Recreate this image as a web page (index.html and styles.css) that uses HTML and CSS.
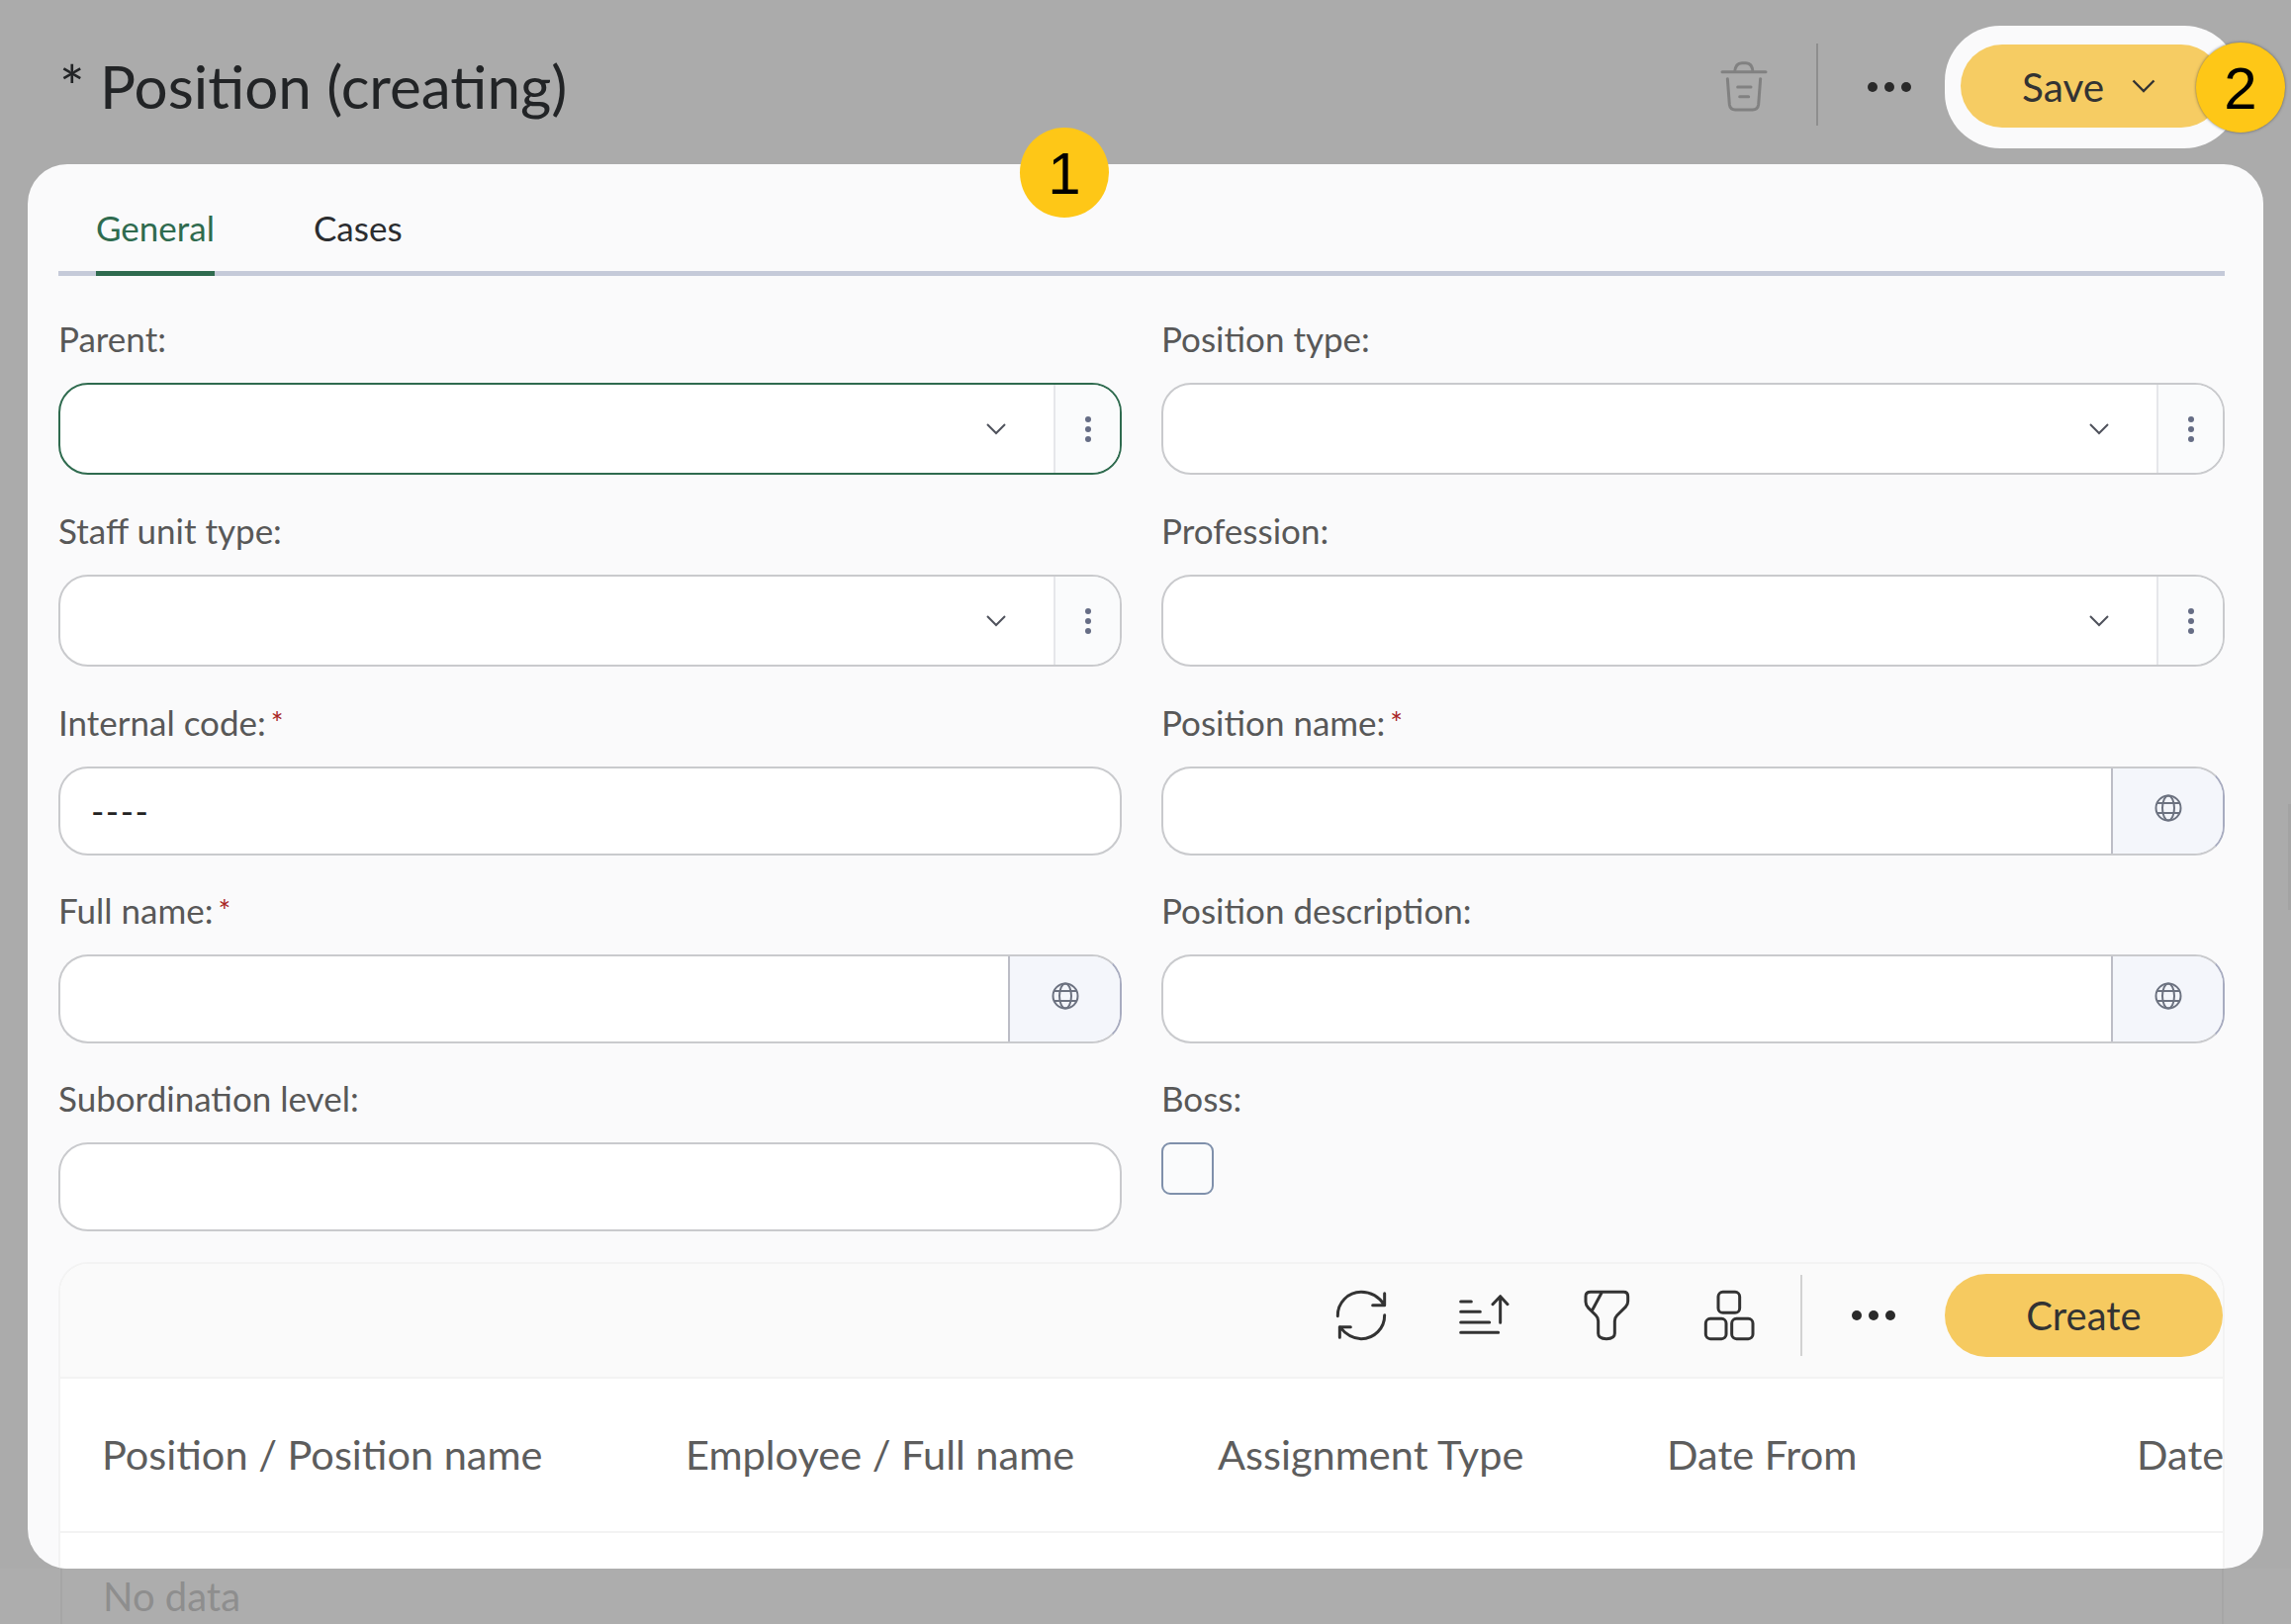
FILE: index.html
```html
<!DOCTYPE html>
<html lang="en">
<head>
    <meta charset="UTF-8">
    <title>Position (creating)</title>
    <link rel="stylesheet" href="styles.css">
</head>

<body>
    <div class="header">
        <h1 class="title">* Position (creating)</h1>
        <div class="header-actions">
            <svg class="trash" viewBox="107 56 168 168">
                <path d="M125 97H257M163 97Q165 70 185 70H197Q216 70 218 97M141 118L147 196Q149 212 165 212H217Q233 212 235 196L241 118M172 143H212M178 172H205"/>
            </svg>
            <span class="header-divider"></span>
            <div class="dots header-dots"><i></i><i></i><i></i></div>
            <div class="save-halo">
                <button class="save">Save
                    <svg class="chevron save-chevron" viewBox="0 0 24 14"><path d="M1.5 1.5L12 12L22.5 1.5"/></svg>
                </button>
            </div>
        </div>
    </div>
    <span class="badge badge-one">1</span>
    <span class="badge badge-two">2</span>
    <span class="scroll-thumb"></span>

    <div class="card">
        <div class="tabs">
            <a class="tab active">General</a>
            <a class="tab">Cases</a>
        </div>

        <div class="form">
            <div class="field">
                <label>Parent:</label>
                <div class="select focused">
                    <div class="select-main"><svg class="chevron" viewBox="0 0 24 14"><path d="M3 2L12 11L21 2"/></svg></div>
                    <div class="select-more"><span class="vdots"><i></i><i></i><i></i></span></div>
                </div>
            </div>
            <div class="field">
                <label>Position type:</label>
                <div class="select">
                    <div class="select-main"><svg class="chevron" viewBox="0 0 24 14"><path d="M3 2L12 11L21 2"/></svg></div>
                    <div class="select-more"><span class="vdots"><i></i><i></i><i></i></span></div>
                </div>
            </div>
            <div class="field">
                <label>Staff unit type:</label>
                <div class="select">
                    <div class="select-main"><svg class="chevron" viewBox="0 0 24 14"><path d="M3 2L12 11L21 2"/></svg></div>
                    <div class="select-more"><span class="vdots"><i></i><i></i><i></i></span></div>
                </div>
            </div>
            <div class="field">
                <label>Profession:</label>
                <div class="select">
                    <div class="select-main"><svg class="chevron" viewBox="0 0 24 14"><path d="M3 2L12 11L21 2"/></svg></div>
                    <div class="select-more"><span class="vdots"><i></i><i></i><i></i></span></div>
                </div>
            </div>
            <div class="field">
                <label>Internal code:<sup>*</sup></label>
                <div class="input"><span class="input-value">----</span></div>
            </div>
            <div class="field">
                <label>Position name:<sup>*</sup></label>
                <div class="input">
                    <div class="lang"><svg class="globe" viewBox="0 0 30 30"><circle cx="15" cy="15" r="12.5"/><ellipse cx="15" cy="15" rx="6" ry="12.5"/><path d="M4 10H26M4 20H26"/></svg></div>
                </div>
            </div>
            <div class="field">
                <label>Full name:<sup>*</sup></label>
                <div class="input">
                    <div class="lang"><svg class="globe" viewBox="0 0 30 30"><circle cx="15" cy="15" r="12.5"/><ellipse cx="15" cy="15" rx="6" ry="12.5"/><path d="M4 10H26M4 20H26"/></svg></div>
                </div>
            </div>
            <div class="field">
                <label>Position description:</label>
                <div class="input">
                    <div class="lang"><svg class="globe" viewBox="0 0 30 30"><circle cx="15" cy="15" r="12.5"/><ellipse cx="15" cy="15" rx="6" ry="12.5"/><path d="M4 10H26M4 20H26"/></svg></div>
                </div>
            </div>
            <div class="field">
                <label>Subordination level:</label>
                <div class="input"></div>
            </div>
            <div class="field">
                <label>Boss:</label>
                <div class="checkbox"></div>
            </div>
        </div>

        <div class="table">
            <div class="toolbar">
                <svg class="tool" viewBox="53 59 168 168"><path d="M66 145A71 71 0 0 1 137 72C165 72 190 85 208 112M208 76V112H172M208 142A71 71 0 0 1 137 214C110 214 90 200 72 178M72 210V178H105"/></svg>
                <svg class="tool" viewBox="424 62 168 168"><path d="M438 104H470M438 135H497M438 167H525M438 198H552M558 168V90M535 112L558 88L580 112"/></svg>
                <svg class="tool" viewBox="796 59 168 168"><path d="M832 72H932Q945 72 945 85V100Q945 110 938 117L912 143Q905 150 905 160V198Q905 214 880 214Q855 214 855 198V160Q855 150 848 143L825 120Q817 112 817 102V85Q817 72 832 72ZM865 75L838 125"/></svg>
                <svg class="tool" viewBox="1169 59 168 168"><rect x="1220" y="72" width="65" height="63" rx="14"/><rect x="1182" y="153" width="62" height="61" rx="14"/><rect x="1261" y="153" width="64" height="61" rx="14"/></svg>
                <span class="toolbar-divider"></span>
                <div class="dots toolbar-dots"><i></i><i></i><i></i></div>
                <button class="create">Create</button>
            </div>
            <div class="table-head">
                <div>Position / Position name</div>
                <div>Employee / Full name</div>
                <div>Assignment Type</div>
                <div>Date From</div>
                <div>Date To</div>
            </div>
            <div class="table-rest"></div>
        </div>
    </div>

    <div class="under">
        <div class="under-table">No data</div>
    </div>
</body>
</html>
```

FILE: styles.css
```css
html, body {
    margin: 0;
    padding: 0;
    height: 1642px;
    overflow: hidden;
    background-color: #ababab;
    font-family: Lato, "Open Sans", sans-serif;
}

body {
    position: relative;
    display: flex;
    flex-direction: column;
}

i {
    display: block;
}

/* header */
.header {
    height: 166px;
    display: flex;
    justify-content: space-between;
    align-items: center;
    padding: 0 52px 0 60px;
    box-sizing: border-box;
}

.title {
    margin: 0;
    font-size: 60.2px;
    font-weight: 400;
    color: #222426;
    position: relative;
    top: 4px;
}

.header-actions {
    display: flex;
    align-items: center;
    position: relative;
    top: 5px;
}

.trash {
    width: 56px;
    height: 56px;
    margin-top: -3px;
    fill: none;
    stroke: #818181;
    stroke-width: 9;
    stroke-linecap: round;
    stroke-linejoin: round;
}

.header-divider {
    width: 2px;
    height: 83px;
    background-color: #8e8e8e;
    margin: -6px 50px 0 45px;
}

.dots {
    display: flex;
    gap: 7px;
}

.dots i {
    width: 10px;
    height: 10px;
    border-radius: 50%;
    background-color: #2a2a2a;
}

.save-halo {
    margin-left: 34px;
    padding: 19px 17px 21px 16px;
    border-radius: 56px;
    background-color: #fafafb;
    display: flex;
}

.save {
    width: 265px;
    height: 84px;
    border: none;
    border-radius: 42px;
    background-color: #f6cc63;
    color: #333333;
    font-family: inherit;
    font-size: 40.5px;
    padding: 0 0 0 62px;
    text-align: left;
    display: flex;
    align-items: center;
}

.chevron {
    fill: none;
    stroke: #4f525c;
    stroke-width: 2;
    width: 24px;
    height: 14px;
}

.save-chevron {
    stroke: #333333;
    stroke-width: 2.4;
    margin-left: 28px;
}

.badge {
    position: absolute;
    width: 90px;
    height: 91px;
    border-radius: 50%;
    background-color: #fec717;
    color: #000000;
    font-family: "Liberation Sans", Arial, sans-serif;
    font-size: 60px;
    line-height: 93px;
    text-align: center;
    z-index: 2;
}

.badge-one {
    left: 1031px;
    top: 129px;
}

.badge-two {
    left: 2220px;
    top: 43px;
    box-shadow: 0 0 3px rgba(60, 60, 60, 0.7);
}

.scroll-thumb {
    position: absolute;
    right: 0;
    top: 813px;
    width: 3px;
    height: 107px;
    background-color: #a3a3a3;
}

/* card */
.card {
    height: 1420px;
    margin: 0 28px;
    padding: 0 39px 0 31px;
    box-sizing: border-box;
    background-color: #fafafb;
    border-radius: 40px;
    overflow: hidden;
    flex-shrink: 0;
}

.tabs {
    height: 113px;
    box-sizing: border-box;
    display: flex;
    gap: 100px;
    padding-left: 38px;
    border-bottom: 5px solid #c5cad9;
}

.tab {
    height: 113px;
    box-sizing: border-box;
    padding-top: 42px;
    font-size: 35px;
    line-height: 44px;
    color: #2b2d30;
}

.tab.active {
    color: #2f6b4f;
    border-bottom: 5px solid #2f6b4f;
}

.form {
    display: grid;
    grid-template-columns: 1075px 1075px;
    column-gap: 40px;
    row-gap: 37px;
    padding-top: 44px;
}

.field label {
    display: block;
    height: 41px;
    line-height: 39px;
    margin-bottom: 23px;
    font-size: 35px;
    color: #585858;
}

.field sup {
    color: #a82424;
    font-size: 30px;
    line-height: 0;
    vertical-align: 2px;
    margin-left: 5px;
}

.select, .input {
    box-sizing: border-box;
    display: flex;
    justify-content: space-between;
    background-color: #ffffff;
    border: 2px solid #c9cacd;
    border-radius: 30px;
    overflow: hidden;
}

.select {
    height: 93px;
}

.select.focused {
    border-color: #2f6b4f;
}

.select-main {
    flex: 1;
    display: flex;
    justify-content: flex-end;
    align-items: center;
    padding-right: 46px;
}

.select-more {
    width: 65px;
    border-left: 2px solid #e6e7ea;
    background-color: #fafbfc;
    display: flex;
    justify-content: center;
    align-items: center;
}

.vdots {
    display: flex;
    flex-direction: column;
    gap: 4px;
}

.vdots i {
    width: 6px;
    height: 6px;
    border-radius: 50%;
    background-color: #666d85;
}

.input {
    height: 90px;
    margin-bottom: -1px;
}

.input-value {
    padding-left: 31px;
    font-size: 36px;
    line-height: 87px;
    letter-spacing: 1.5px;
    color: #222222;
}

.lang {
    margin-left: auto;
    width: 113px;
    box-sizing: border-box;
    background-color: #f4f6fb;
    border-left: 2px solid #bcbdc6;
    display: flex;
    justify-content: center;
    align-items: center;
    padding-bottom: 6px;
}

.input:has(.lang) {
    border-right-color: #a8acc0;
}

.globe {
    width: 30px;
    height: 30px;
    fill: none;
    stroke: #6c7280;
    stroke-width: 2;
}

.checkbox {
    width: 53px;
    height: 53px;
    box-sizing: border-box;
    border: 2px solid #7f90ab;
    border-radius: 9px;
    background-color: #fafbfc;
}

/* table */
.table {
    margin-top: 32px;
    border: 2px solid #f3f3f3;
    border-bottom: none;
    border-radius: 30px 30px 0 0;
    height: 320px;
    overflow: hidden;
    background-color: #ffffff;
}

.toolbar {
    height: 116px;
    box-sizing: border-box;
    padding-bottom: 10px;
    background-color: #fafafa;
    border-bottom: 2px solid #f3f3f3;
    display: flex;
    align-items: center;
    justify-content: flex-end;
}

.tool {
    width: 56px;
    height: 56px;
    margin-right: 68px;
    fill: none;
    stroke: #333333;
    stroke-width: 9;
    stroke-linecap: round;
    stroke-linejoin: round;
}

.toolbar-divider {
    width: 2px;
    height: 82px;
    margin-left: -24px;
    background-color: #d2d2d2;
}

.toolbar-dots {
    margin: 0 50px;
}

.create {
    width: 281px;
    height: 84px;
    border: none;
    border-radius: 42px;
    background-color: #f6ca60;
    color: #333333;
    font-family: inherit;
    font-size: 40px;
}

.table-head {
    height: 156px;
    box-sizing: border-box;
    padding-bottom: 2px;
    display: grid;
    grid-template-columns: 590px 538px 454px 475px 400px;
    align-items: center;
    border-bottom: 2px solid #f3f3f3;
    font-size: 41.5px;
    color: #5d5d5d;
    white-space: nowrap;
}

.table-head div {
    padding-left: 42px;
}

/* dimmed part of the table under the card */
.under {
    flex: 1;
    background-color: #adadad;
    padding: 0 68px 0 61px;
}

.under-table {
    height: 100%;
    padding: 4px 0 0 41px;
    box-sizing: border-box;
    border-left: 2px solid #a6a6a6;
    border-right: 2px solid #a6a6a6;
    font-size: 40px;
    color: #8e8e8e;
}
```
